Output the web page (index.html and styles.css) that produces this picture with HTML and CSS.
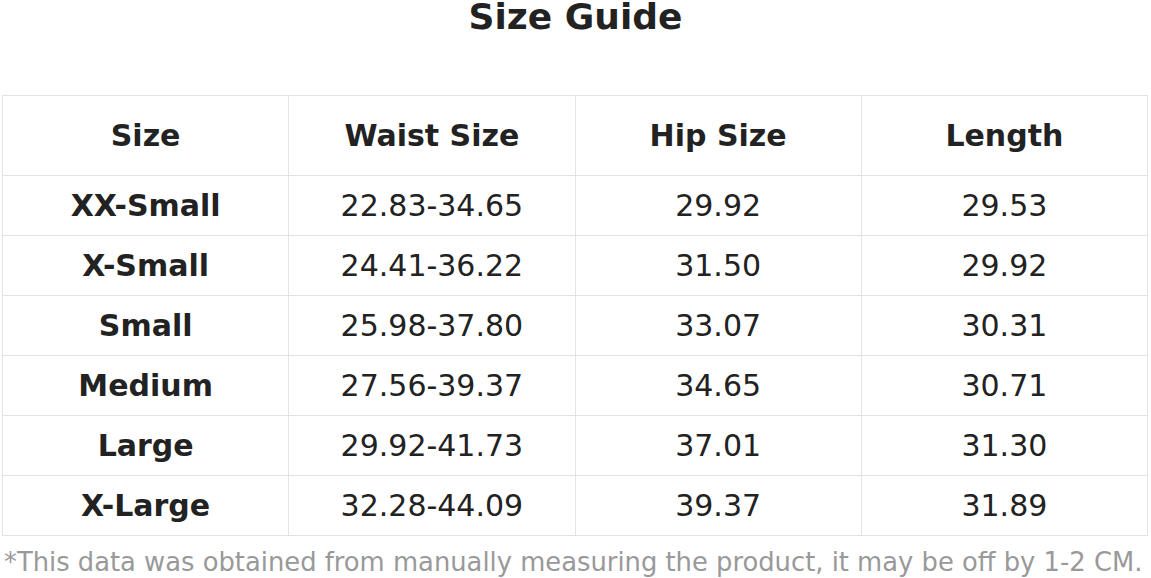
FILE: index.html
```html
<!DOCTYPE html>
<html>
<head>
<meta charset="utf-8">
<link rel="stylesheet" href="styles.css">
</head>
<body>
<div class="page">
  <h1 class="title">Size Guide</h1>
  <table class="guide">
    <thead>
      <tr><th>Size</th><th>Waist Size</th><th>Hip Size</th><th>Length</th></tr>
    </thead>
    <tbody>
      <tr><th>XX-Small</th><td>22.83-34.65</td><td>29.92</td><td>29.53</td></tr>
      <tr><th>X-Small</th><td>24.41-36.22</td><td>31.50</td><td>29.92</td></tr>
      <tr><th>Small</th><td>25.98-37.80</td><td>33.07</td><td>30.31</td></tr>
      <tr><th>Medium</th><td>27.56-39.37</td><td>34.65</td><td>30.71</td></tr>
      <tr><th>Large</th><td>29.92-41.73</td><td>37.01</td><td>31.30</td></tr>
      <tr><th>X-Large</th><td>32.28-44.09</td><td>39.37</td><td>31.89</td></tr>
    </tbody>
  </table>
  <p class="note">*This data was obtained from manually measuring the product, it may be off by 1-2 CM.</p>
</div>
</body>
</html>
```

FILE: styles.css
```css
html, body {
  margin: 0;
  padding: 0;
  background: #fff;
}
body {
  font-family: "DejaVu Sans", sans-serif;
  color: #222;
}
.page {
  width: 1151px;
}
.title {
  margin: 0;
  padding-top: 2px;
  font-size: 36px;
  line-height: 29px;
  font-weight: bold;
  text-align: center;
  color: #222;
}
.guide {
  margin: 64px 0 0 2px;
  width: 1146px;
  border-collapse: collapse;
  table-layout: fixed;
}
.guide th,
.guide td {
  border: 1px solid #e3e3e3;
  text-align: center;
  vertical-align: middle;
  padding: 0;
  height: 59px;
  font-size: 30px;
  line-height: 36px;
}
.guide th {
  font-weight: bold;
}
.guide td {
  font-weight: normal;
}
.guide thead th {
  height: 79px;
}
.note {
  margin: 10px 0 0 4px;
  font-size: 25.8px;
  line-height: 32px;
  color: #999;
  white-space: nowrap;
}
```
